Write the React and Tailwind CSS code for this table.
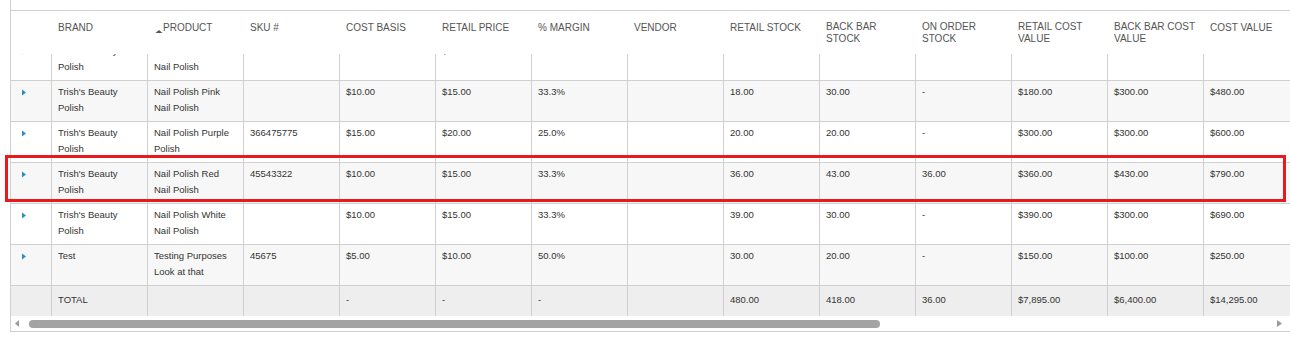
import React from "react";

const headers = [
  ["BRAND"],
  ["PRODUCT"],
  ["SKU #"],
  ["COST BASIS"],
  ["RETAIL PRICE"],
  ["% MARGIN"],
  ["VENDOR"],
  ["RETAIL STOCK"],
  ["BACK BAR", "STOCK"],
  ["ON ORDER", "STOCK"],
  ["RETAIL COST", "VALUE"],
  ["BACK BAR COST", "VALUE"],
  ["COST VALUE"],
];

const rows = [
  [["Trish's Beauty", "Polish"], ["Nail Polish Green", "Nail Polish"], ["345666666"], [""], ["$10.00"], ["100%"], [""], ["20.00"], ["22.00"], ["-"], [""], [""], [""]],
  [["Trish's Beauty", "Polish"], ["Nail Polish Pink", "Nail Polish"], [""], ["$10.00"], ["$15.00"], ["33.3%"], [""], ["18.00"], ["30.00"], ["-"], ["$180.00"], ["$300.00"], ["$480.00"]],
  [["Trish's Beauty", "Polish"], ["Nail Polish Purple", "Polish"], ["366475775"], ["$15.00"], ["$20.00"], ["25.0%"], [""], ["20.00"], ["20.00"], ["-"], ["$300.00"], ["$300.00"], ["$600.00"]],
  [["Trish's Beauty", "Polish"], ["Nail Polish Red", "Nail Polish"], ["45543322"], ["$10.00"], ["$15.00"], ["33.3%"], [""], ["36.00"], ["43.00"], ["36.00"], ["$360.00"], ["$430.00"], ["$790.00"]],
  [["Trish's Beauty", "Polish"], ["Nail Polish White", "Nail Polish"], [""], ["$10.00"], ["$15.00"], ["33.3%"], [""], ["39.00"], ["30.00"], ["-"], ["$390.00"], ["$300.00"], ["$690.00"]],
  [["Test"], ["Testing Purposes", "Look at that"], ["45675"], ["$5.00"], ["$10.00"], ["50.0%"], [""], ["30.00"], ["20.00"], ["-"], ["$150.00"], ["$100.00"], ["$250.00"]],
];

const total = ["TOTAL", "", "", "-", "-", "-", "", "480.00", "418.00", "36.00", "$7,895.00", "$6,400.00", "$14,295.00"];

function Expand() {
  return (
    <svg width="4" height="7" viewBox="0 0 4 7" className="block">
      <path d="M0 0.5L4 3.5L0 6.5Z" fill="#2b8dc2" />
    </svg>
  );
}

export default function App() {
  return (
    <div className="relative w-[1290px] h-[343px] overflow-hidden bg-white text-[#333] font-['Liberation_Sans',Arial,Helvetica,sans-serif]">
      <div className="ml-[10px] w-[1290px] border-l border-b border-[#d0d0d0] flex flex-col">
        <div className="h-[10px]" />
        {/* header */}
        <div className="flex h-[44px] border-t border-[#d0d0d0] shrink-0">
          <div className="w-[40px] shrink-0" />
          {headers.map((lines, i) => (
            <div
              key={i}
              className={`w-[96px] shrink-0 border-l border-transparent pl-[6px] text-[10px] leading-[12px] text-[#555] whitespace-nowrap ${
                lines.length > 1 ? "pt-[10px]" : "pt-[11px]"
              }`}
            >
              {i === 1 ? (
                <div className="flex items-start">
                  <svg width="8" height="3" viewBox="0 0 8 3" className="mt-[8px] ml-px">
                    <path d="M0.5 3L4 0L7.5 3Z" fill="#555" />
                  </svg>
                  <span>PRODUCT</span>
                </div>
              ) : (
                lines.map((l, j) => <div key={j}>{l}</div>)
              )}
            </div>
          ))}
        </div>
        {/* body */}
        <div className="h-[232px] overflow-hidden shrink-0">
          <div className="-mt-[14px]">
            {rows.map((row, r) => (
              <div
                key={r}
                className={`flex h-[41px] border-b border-[#d0d0d0] ${r % 2 ? "bg-[#f7f7f7]" : "bg-white"}`}
              >
                <div className="w-[40px] shrink-0 pl-[11px] pt-[8px]">
                  <Expand />
                </div>
                {row.map((lines, c) => (
                  <div
                    key={c}
                    className="w-[96px] shrink-0 border-l border-[#d0d0d0] pl-[6px] pt-[3px] text-[9.5px] leading-[16px] whitespace-nowrap overflow-hidden"
                  >
                    {lines.map((l, j) => (
                      <div key={j}>{l || "\u00a0"}</div>
                    ))}
                  </div>
                ))}
              </div>
            ))}
          </div>
        </div>
        {/* total */}
        <div className="flex h-[30px] bg-[#eeeeee] shrink-0">
          <div className="w-[40px] shrink-0" />
          {total.map((t, c) => (
            <div
              key={c}
              className="w-[96px] shrink-0 border-l border-[#d0d0d0] pl-[6px] pt-[6px] text-[9.5px] leading-[16px] whitespace-nowrap"
            >
              {t}
            </div>
          ))}
        </div>
        {/* horizontal scrollbar */}
        <div className="flex items-center h-[15px] bg-white shrink-0">
          <svg width="4" height="7" viewBox="0 0 4 7" className="ml-[4px] shrink-0">
            <path d="M4 0L0 3.5L4 7Z" fill="#9a9a9a" />
          </svg>
          <div className="ml-[10px] w-[851px] h-[8px] rounded-full bg-[#a3a3a3] shrink-0" />
          <svg width="5" height="7" viewBox="0 0 5 7" className="ml-[397px] shrink-0">
            <path d="M0 0L5 3.5L0 7Z" fill="#9a9a9a" />
          </svg>
        </div>
      </div>
      {/* highlight annotation */}
      <div className="absolute left-[5px] top-[155px] w-[1281px] h-[47px] border-[3px] border-[#e8191f] pointer-events-none" />
    </div>
  );
}
